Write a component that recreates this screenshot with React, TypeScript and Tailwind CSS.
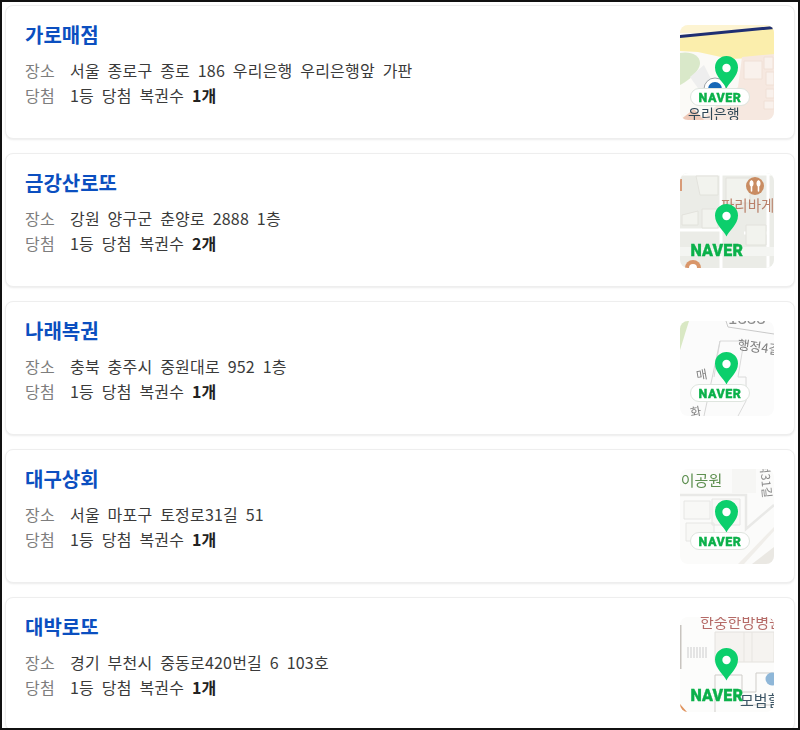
const FONT = '"Noto Sans CJK KR", "Noto Sans", sans-serif';

function Pin() {
  return (
    <g>
      <path d="M46.5 63.5 C44.5 58 35 52 35 42.5 A11.5 11.5 0 0 1 58 42.5 C58 52 48.5 58 46.5 63.5 Z" fill="#0ccf6c" />
      <circle cx="46.5" cy="43" r="4.2" fill="#ffffff" />
    </g>
  );
}

function Badge() {
  return (
    <g>
      <rect x="10.5" y="63.5" width="59" height="17" rx="8.5" fill="#ffffff" stroke="#dfe5df" />
      <text x="40" y="76.5" textAnchor="middle" fontSize="12.5" fontWeight="900" fill="#0cb14b" stroke="#0cb14b" strokeWidth="0.3" fontFamily="Roboto, sans-serif" letterSpacing="0.5">NAVER</text>
    </g>
  );
}

function Plain({ y }: { y: number }) {
  return (
    <text x="10.5" y={y} fontSize="16" fontWeight="900" fill="#0cb14b" stroke="#0cb14b" strokeWidth="0.35" fontFamily="Roboto, sans-serif" letterSpacing="0.2">NAVER</text>
  );
}

function Map1() {
  return (
    <svg viewBox="0 0 94 95" className="w-full h-full">
      <rect width="94" height="95" fill="#fbfaf7" />
      <rect width="94" height="8" fill="#fdf4d2" />
      <path d="M0 10 L94 2 V32 L50 34 L18 27 L0 26 Z" fill="#fbeeac" />
      <path d="M0 10 L94 1 V4 L0 13 Z" fill="#1f2f72" />
      <path d="M0 28 C10 26 20 30 20 38 C20 46 8 56 0 60 Z" fill="#d9e8c9" />
      <path d="M62 32 L94 29 V95 L20 95 L58 62 Z" fill="#f6e8e0" />
      <path d="M64 36 H82 V54 H64 Z M84 32 H93 V44 H84 Z M86 47 H94 V60 H86 Z M86 64 H94 V73 H86 Z M84 76 H94 V84 H84 Z" fill="#f9f1ec" stroke="#f0e0d6" />
      <path d="M10 52 L24 40 L32 56 L20 66 Z" fill="#eeeeee" />
      <path d="M0 95 L14 84 L24 95 Z" fill="#eec9b8" />
      <circle cx="35" cy="64" r="11" fill="#ffffff" stroke="#9ca3a8" />
      <circle cx="35" cy="64" r="7" fill="#1667b7" />
      <Pin />
      <Badge />
      <text x="8" y="94" fontSize="14" fill="#2f4756" fontFamily={FONT}>우리은행</text>
    </svg>
  );
}

function Map2() {
  return (
    <svg viewBox="0 0 94 95" className="w-full h-full">
      <rect width="94" height="95" fill="#ebece7" />
      <path d="M0 1 H94 M41 0 V95 M88 0 V95 M0 78 H94 M0 57 H40 M64 60 H88" stroke="#ffffff" strokeWidth="3" fill="none" />
      <path d="M16 3 H38 V22 H20 Z M46 5 H70 V30 H46 Z M2 42 L18 38 V52 H2 Z M22 36 H38 V55 H22 Z M66 52 H86 V72 H66 Z" fill="#f2f3ee" stroke="#e2e2dc" />
      <rect x="0" y="6" width="2" height="12" fill="#d89b78" />
      <circle cx="75" cy="13" r="9" fill="#c98c62" />
      <path d="M71.5 8 V18 M78.5 8 V18" stroke="#ffffff" strokeWidth="1.6" strokeLinecap="round" />
      <ellipse cx="71.5" cy="10.5" rx="2" ry="3" fill="#ffffff" />
      <ellipse cx="78.5" cy="10.5" rx="2" ry="3" fill="#ffffff" />
      <text x="41" y="38" fontSize="14.5" fill="#b9806a" fontFamily={FONT}>파리바게</text>
      <rect x="0" y="74" width="94" height="9" fill="#f4f5f2" />
      <circle cx="13" cy="95" r="8" fill="#d9966a" />
      <circle cx="13" cy="95" r="4" fill="#ffffff" />
      <Pin />
      <Plain y={83} />
    </svg>
  );
}

function Map3() {
  return (
    <svg viewBox="0 0 94 95" className="w-full h-full">
      <rect width="94" height="95" fill="#fbfbfb" />
      <path d="M0 29 L9 0 H0 Z" fill="#d9e8c4" />
      <path d="M46 0 L48 6 L94 13" stroke="#c9c9c9" fill="none" />
      <path d="M40 20 H64 L58 56 H66 V80 L58 95 M40 20 L34 56" stroke="#dadada" fill="none" />
      <path d="M24 95 L40 20" stroke="#d5d5d5" fill="none" />
      <text x="48" y="3" fontSize="17" fill="#8c8c8c" fontFamily={FONT}>1888</text>
      <text x="57" y="28" fontSize="13" fill="#7e7e7e" fontFamily={FONT} transform="rotate(8 57 28)">행정4길</text>
      <text x="17" y="59" fontSize="12" fill="#7e7e7e" fontFamily={FONT} transform="rotate(-10 17 59)">매</text>
      <text x="11" y="96" fontSize="12" fill="#7e7e7e" fontFamily={FONT} transform="rotate(-10 11 96)">화</text>
      <Pin />
      <Badge />
    </svg>
  );
}

function Map4() {
  return (
    <svg viewBox="0 0 94 95" className="w-full h-full">
      <rect width="94" height="95" fill="#fbfbfa" />
      <rect x="52" y="0" width="24" height="24" fill="#f6f6f4" />
      <path d="M0 26 H66 V60 L94 36" stroke="#e9e9e7" strokeWidth="2.5" fill="none" />
      <path d="M4 32 H30 V50 H4 Z M32 30 H60 V56 H32 Z M6 54 H34 V72 H6 Z" fill="#f8f8f6" stroke="#e6e6e4" />
      <path d="M72 95 L94 78 V95 Z" fill="#eae8e3" />
      <path d="M58 95 L94 58 V62 L64 95 Z" fill="#f0eeea" />
      <text x="-13" y="17" fontSize="15" fill="#5d8f4f" fontFamily={FONT}>린이공원</text>
      <text x="0" y="0" fontSize="12" fill="#8a8a8a" fontFamily={FONT} transform="translate(80 -6) rotate(85)">덕31길</text>
      <Pin />
      <Badge />
    </svg>
  );
}

function Map5() {
  return (
    <svg viewBox="0 0 94 95" className="w-full h-full">
      <rect width="94" height="95" fill="#fcfcfb" />
      <rect x="0" y="8" width="1.5" height="44" fill="#c8c4bf" />
      <path d="M35 15 H94 V45 H35 Z" fill="#f5f3f0" stroke="#e4e2de" />
      <path d="M64 15 V45 M72 15 V45" stroke="#e7e5e1" fill="none" />
      <path d="M8 30 V41 M11 30 V41 M14 30 V41 M17 30 V41 M20 30 V41 M23 30 V41 M26 30 V41" stroke="#dcdcdc" strokeWidth="1.5" fill="none" />
      <path d="M35 58 H62 V75 H76 V56 H94 M35 58 V95 M62 88 H94" stroke="#cfcdc9" fill="none" />
      <circle cx="92" cy="62" r="6.5" fill="#8fb7d8" />
      <path d="M0 87 L7 95 H0 Z" fill="#e0935d" />
      <text x="20" y="11" fontSize="15" fill="#b56a67" fontFamily={FONT}>한숭한방병원</text>
      <text x="60" y="89" fontSize="15" fill="#3d5666" fontFamily={FONT}>모범힐</text>
      <Pin />
      <Plain y={84} />
    </svg>
  );
}

const items = [
  { name: "가로매점", addr: "서울 종로구 종로 186 우리은행 우리은행앞 가판", count: "1개", map: <Map1 /> },
  { name: "금강산로또", addr: "강원 양구군 춘양로 2888 1층", count: "2개", map: <Map2 /> },
  { name: "나래복권", addr: "충북 충주시 중원대로 952 1층", count: "1개", map: <Map3 /> },
  { name: "대구상회", addr: "서울 마포구 토정로31길 51", count: "1개", map: <Map4 /> },
  { name: "대박로또", addr: "경기 부천시 중동로420번길 6 103호", count: "1개", map: <Map5 /> },
];

export default function App() {
  return (
    <div
      className="w-[800px] h-[730px] bg-white border-2 border-[#111111] overflow-hidden pt-[3px] px-[3px] flex flex-col gap-[14px]"
      style={{ fontFamily: FONT }}
    >
      {items.map((it) => (
        <div
          key={it.name}
          className="shrink-0 h-[134px] w-[790px] bg-white rounded-[8px] border border-[#eeeeee] shadow-[0_1px_2px_rgba(0,0,0,0.08)] pl-[19px] pr-[20px] pt-[16px] flex justify-between"
        >
          <div className="flex flex-col">
            <div className="text-[20px] leading-[26px] font-bold text-[#0b4fc0]">{it.name}</div>
            <div className="mt-[10px] flex text-[16px] leading-[25px] text-[#3a3a3a] tracking-[0.2px] [word-spacing:4px]">
              <span className="w-[45px] text-[#7d7d7d]">장소</span>
              <span>{it.addr}</span>
            </div>
            <div className="flex text-[16px] leading-[25px] text-[#3a3a3a] tracking-[0.2px] [word-spacing:4px]">
              <span className="w-[45px] text-[#7d7d7d]">당첨</span>
              <span>
                1등 당첨 복권수 <b className="font-bold text-[#222222]">{it.count}</b>
              </span>
            </div>
          </div>
          <div className="mt-[3px] w-[94px] h-[95px] rounded-[8px] overflow-hidden shrink-0 blur-[0.3px]">{it.map}</div>
        </div>
      ))}
    </div>
  );
}
